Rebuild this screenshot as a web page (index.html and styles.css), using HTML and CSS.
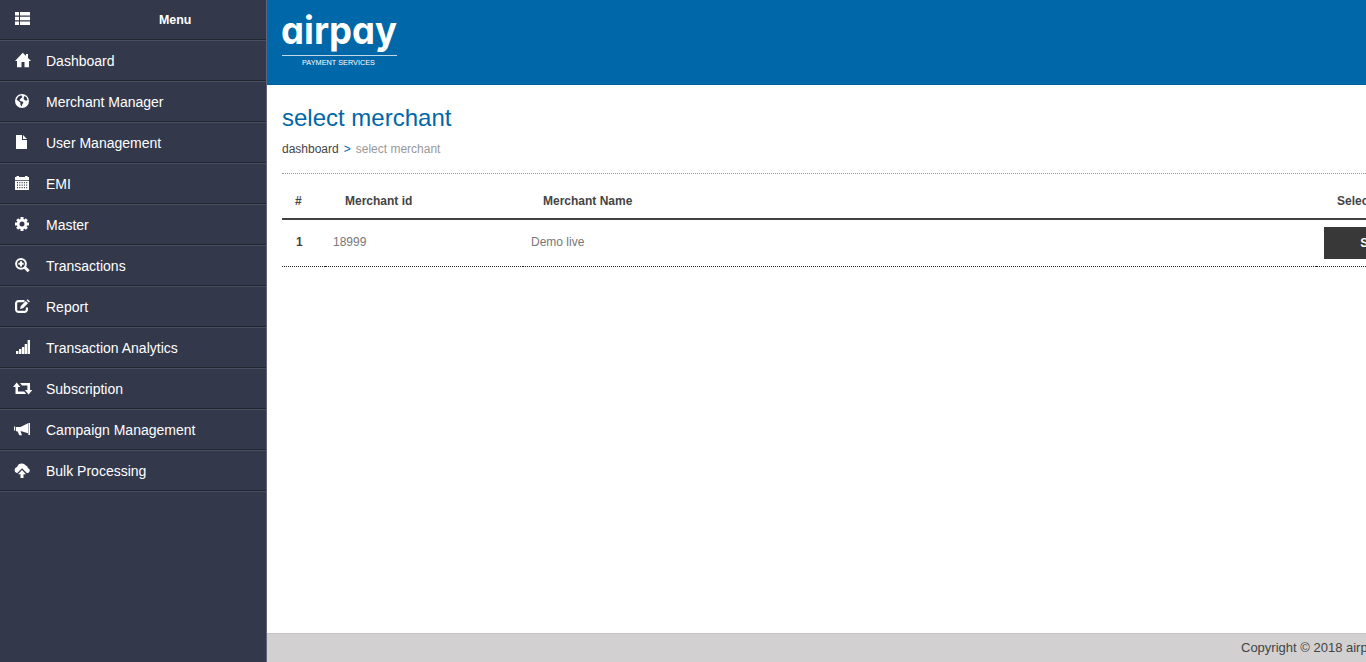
FILE: index.html
```html
<!DOCTYPE html>
<html lang="en">
<head>
<meta charset="utf-8">
<title>select merchant</title>
<link rel="stylesheet" href="styles.css">
</head>
<body>
<div class="app">
<nav class="sidebar">
  <div class="menu-head"><svg class="icon" viewBox="0 0 20 16"><path d="M2 1h4v3.500H2zM7 1h10v3.500H7zM2 5.700h4v3.500H2zM7 5.700h10v3.500H7zM2 10.400h4V14H2zM7 10.400h10V14H7z"/></svg><span>Menu</span></div>
  <a class="item"><svg class="icon" viewBox="0 0 20 16"><path d="M9.800.7 18 9h-2v6.200h-4.500V10H8.500v5.200H4V9H2zM13 2h2v4l-2-2z"/></svg>Dashboard</a>
  <a class="item"><svg class="icon" viewBox="0 0 20 16"><path fill-rule="evenodd" d="M9 1a7 7 0 1 0 0 14A7 7 0 0 0 9 1zM8.200 2.300 9.500 4 8 5.300 6.500 7l1.200 1.300 1.800.2 1 1.300-1.300 1.500-.2 2.200-1.500-1.500-.2-2.500-1.800-1.500L3.500 6.500l2-3zM11.500 3l2 1.300 1 2.700-1.500.8-1.500-.8-1-1.700z"/></svg>Merchant Manager</a>
  <a class="item"><svg class="icon" viewBox="0 0 20 16"><path d="M3 1h6v5h5v9H3zM10 1l4 4h-4z"/></svg>User Management</a>
  <a class="item"><svg class="icon" viewBox="0 0 20 16"><path d="M2 2h1.500V1H6v1h6V1h2.500v1H16v3H2z"/><path fill-rule="evenodd" d="M2 5.800h14V15H2zM4 7v1.300h1V7zM6.300 7v1.300h1V7zM8.600 7v1.300h1V7zM10.900 7v1.300h1V7zM13.200 7v1.300h1V7zM4 9.500v1.300h1V9.500zM6.300 9.500v1.300h1V9.500zM8.600 9.500v1.300h1V9.500zM10.900 9.500v1.300h1V9.500zM13.200 9.500v1.300h1V9.500zM4 12v1.300h1V12zM6.300 12v1.300h1V12zM8.600 12v1.300h1V12zM10.900 12v1.300h1V12zM13.200 12v1.300h1V12z"/></svg>EMI</a>
  <a class="item"><svg class="icon" viewBox="0 0 20 16"><circle class="line" cx="9" cy="8" r="3.900" stroke-width="2.800"/><path class="line" stroke-width="3" d="M9 1v2.500M9 12.500V15M2 8h2.500M13.500 8H16M4.200 3.200 5.700 4.700M12.300 11.300l1.500 1.500M13.800 3.200l-1.500 1.500M5.700 11.300l-1.500 1.500"/></svg>Master</a>
  <a class="item"><svg class="icon" viewBox="0 0 20 16"><circle class="line" cx="8" cy="6.800" r="4.900" stroke-width="2"/><path class="line" stroke-width="2" d="M8 4.200v5.200M5.400 6.800h5.200"/><path class="line" stroke-width="3" d="m11.700 10.300 4 3.900"/></svg>Transactions</a>
  <a class="item"><svg class="icon" viewBox="0 0 20 16"><path class="line" stroke-width="2.200" d="M11.500 3.100H5.500a2.400 2.400 0 0 0-2.400 2.400v6a2.400 2.400 0 0 0 2.400 2.400h6a2.400 2.400 0 0 0 2.400-2.400V9.500"/><path d="m7 11 .8-3 5-5 2.200 2.200-5 5zM13.600 2.300l1-1 2.300 2.200-1 1z"/></svg>Report</a>
  <a class="item"><svg class="icon" viewBox="0 0 20 16"><path d="M3 12h2.400v3H3zM6 10h2.400v5H6zM8.900 8h2.400v7H8.900zM11.700 5h2.400v10h-2.400zM14.600 1H17v14h-2.400z"/></svg>Transaction Analytics</a>
  <a class="item"><svg class="icon" viewBox="0 0 20 16"><path d="M3.700 2.500 7.400 7H5v4.500h6.200l2 2.500H2.500V7H0zM7 3h10v7h2.300l-3.700 4.400L11.900 10h2.500V5.500H9z"/></svg>Subscription</a>
  <a class="item"><svg class="icon" viewBox="0 0 20 16"><path d="M15.400 2H17v12h-1.600zM15 2.300v10L8.500 10.300H7.500L9 14.300H6.300L4.500 10.300H3V6h4.500zM1 5.500h1.200v4H1z"/></svg>Campaign Management</a>
  <a class="item"><svg class="icon" viewBox="0 0 20 16"><path d="M3.800 11A3.100 3.100 0 0 1 4 5a5 5 0 0 1 8.800-1.400A3 3 0 0 1 15 6.200a2.500 2.500 0 0 1 0 4.800h-1.200L9 6.300 4.300 11z"/><path d="m9 8 4 4.200h-2.500V16h-3v-3.800H5z"/></svg>Bulk Processing</a>
  <div class="rest"></div>
</nav>
<main class="main">
  <header class="banner">
    <svg class="logo" viewBox="0 0 118 56"><text class="brand" x="-1" y="33" textLength="116" lengthAdjust="spacingAndGlyphs">airpay</text><path class="rule" d="M0 44h115v1H0z"/><text class="tag" x="20" y="53.500" textLength="73" lengthAdjust="spacingAndGlyphs">PAYMENT SERVICES</text></svg>
  </header>
  <section class="content">
    <h1>select merchant</h1>
    <div class="crumbs"><span class="home">dashboard</span><span class="sep">&gt;</span><span>select merchant</span></div>
    <table class="grid">
      <colgroup><col class="c1"><col class="c2"><col class="c3"><col class="c4"></colgroup>
      <thead><tr><th>#</th><th>Merchant id</th><th>Merchant Name</th><th>Select</th></tr></thead>
      <tbody><tr><td class="num">1</td><td>18999</td><td>Demo live</td><td class="act"><span class="btn">SELECT</span></td></tr></tbody>
    </table>
  </section>
  <footer class="foot">Copyright © 2018 airpay</footer>
</main>
</div>
</body>
</html>
```
FILE: styles.css
```css
* { box-sizing: border-box; }
body { margin: 0; overflow: hidden; font-family: "Liberation Sans", Arial, sans-serif; }
.app { display: flex; width: 1366px; height: 662px; overflow: hidden; background: #fff; }
.sidebar { display: flex; flex-direction: column; flex: none; width: 267px; background: #33384b; border-right: 1px solid #626579; color: #fff; font-size: 14px; }
.menu-head { display: flex; height: 40px; padding: 11px 0 0 13px; border-bottom: 1px solid #222631; font-weight: bold; line-height: 17px; }
.menu-head span { margin-left: 126px; font-size: 13.500px; transform: scaleX(.92); transform-origin: left; }
.item { display: flex; height: 41px; padding: 11px 0 0 13px; border-top: 1px solid #494e5f; border-bottom: 1px solid #222631; line-height: 19px; gap: 13px; }
.icon { flex: none; width: 20px; height: 16px; fill: #fff; overflow: visible; }
.line { fill: none; stroke: #fff; }
.rest { flex: 1; border-top: 1px solid #494e5f; }
.main { display: flex; flex-direction: column; flex: 1; min-width: 0; overflow: hidden; }
.banner { flex: none; height: 85px; padding: 11px 0 0 15px; background: #0067a8; border-bottom: 1px solid #005f9e; }
.logo { display: block; width: 118px; height: 56px; fill: #fff; overflow: visible; }
.brand { font: 700 39px Inter, sans-serif; font-feature-settings: "cv11"; }
.rule { opacity: .75; }
.tag { font: 7px "Liberation Sans", sans-serif; }
.content { flex: 1; padding-left: 15px; }
h1 { margin: 18px 0 0; color: #0067a8; font-size: 24px; font-weight: normal; line-height: 30px; }
.crumbs { display: flex; height: 41px; padding-top: 8px; border-bottom: 1px dotted #999; color: #999; font-size: 12px; line-height: 16px; }
.home { color: #444; }
.sep { margin: 0 5px; color: #0067a8; }
.grid { width: 1168px; border-collapse: collapse; table-layout: fixed; font-size: 12px; color: #777; }
.c1 { width: 43px; }
.c2 { width: 198px; }
.c3 { width: 793px; }
.c4 { width: 134px; }
th { height: 45px; padding: 9px 0 0 20px; border-bottom: 2px solid #424143; color: #444; text-align: left; }
th:first-child { padding-left: 13px; }
th:last-child { padding-left: 21px; }
td { height: 47px; padding: 0 0 1px 8px; border-bottom: 1px dotted #222; }
.num { padding-left: 14px; color: #444; font-weight: bold; }
.act { padding: 0 0 0 8px; }
.btn { display: block; width: 120px; height: 32px; background: #383838; color: #fff; font-weight: bold; line-height: 32px; text-align: center; }
.foot { flex: none; height: 29px; padding-left: 974px; background: #d2d0d1; border-top: 1px solid #c6c4c5; color: #444; font-size: 13px; line-height: 28px; white-space: nowrap; }
```
